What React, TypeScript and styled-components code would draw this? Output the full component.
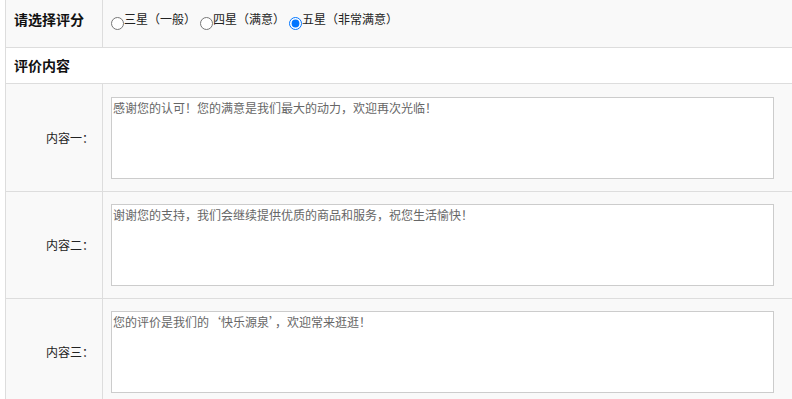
import React from "react";
import styled, { createGlobalStyle } from "styled-components";

const Global = createGlobalStyle`
  html, body { margin: 0; padding: 0; background: #fff; overflow: hidden; }
  body { font-family: "Noto Sans CJK SC", "Noto Sans", sans-serif; color: #333; }
`;

const Table = styled.table`
  margin-left: 5px;
  width: calc(100% - 5px);
  border-collapse: collapse;
  table-layout: fixed;
  border-left: 1px solid #dddddd;
`;

const FirstCol = styled.col`
  width: 97px;
`;

const Row = styled.tr<{ $bg?: string }>`
  background: ${(p) => p.$bg || "#fff"};
  border-bottom: 1px solid #dddddd;
`;

const HeadCell = styled.td<{ $h: number }>`
  height: ${(p) => p.$h}px;
  box-sizing: border-box;
  padding: 9px 8px 0 8px;
  vertical-align: top;
  font-size: 14px;
  font-weight: bold;
  line-height: 20px;
  color: #111;
  border-right: 1px solid #dddddd;
  white-space: nowrap;
`;

const SectionCell = styled.td`
  height: 36px;
  box-sizing: border-box;
  padding: 0 8px;
  vertical-align: middle;
  font-size: 14px;
  font-weight: bold;
  line-height: 20px;
  color: #111;
`;

const LabelCell = styled.td`
  box-sizing: border-box;
  padding: 0 8px;
  text-align: right;
  vertical-align: middle;
  font-size: 12px;
  color: #222;
  border-right: 1px solid #dddddd;
  white-space: nowrap;
`;

const FieldCell = styled.td<{ $top?: number }>`
  padding: ${(p) => p.$top ?? 12}px 8px 12px 8px;
  vertical-align: top;
`;

const RadioCell = styled.td`
  padding: 10px 8px 0 8px;
  vertical-align: top;
`;

const RadioGroup = styled.div`
  display: flex;
  align-items: flex-start;
  gap: 4px;
`;

const RadioLabel = styled.label`
  display: inline-flex;
  align-items: flex-start;
  font-size: 12px;
  line-height: 18px;
  color: #222;
  cursor: pointer;
`;

const Radio = styled.input`
  width: 13px;
  height: 13px;
  margin: 7px 0 0 0;
`;

const Area = styled.textarea`
  display: block;
  width: 663px;
  height: 82px;
  box-sizing: border-box;
  margin: 0;
  padding: 1px 1px;
  border: 1px solid #cccccc;
  resize: none;
  font-family: "Noto Sans CJK SC", "Noto Sans", sans-serif;
  font-size: 12px;
  line-height: 18px;
  color: #666;
  background: #fff;
  outline: none;
`;

const options = ["三星（一般）", "四星（满意）", "五星（非常满意）"];
const items = [
  { label: "内容一：", text: "感谢您的认可！您的满意是我们最大的动力，欢迎再次光临！", top: 13 },
  { label: "内容二：", text: "谢谢您的支持，我们会继续提供优质的商品和服务，祝您生活愉快！", top: 12 },
  { label: "内容三：", text: "您的评价是我们的‘快乐源泉’，欢迎常来逛逛！", top: 12 },
];

export default function App() {
  const [rating, setRating] = React.useState(2);
  return (
    <>
      <Global />
      <Table>
        <colgroup>
          <FirstCol />
          <col />
        </colgroup>
        <tbody>
          <Row $bg="#f9f9f9">
            <HeadCell $h={47}>请选择评分</HeadCell>
            <RadioCell>
              <RadioGroup>
                {options.map((o, i) => (
                  <RadioLabel key={o}>
                    <Radio
                      type="radio"
                      name="rating"
                      checked={rating === i}
                      onChange={() => setRating(i)}
                    />
                    <span>{o}</span>
                  </RadioLabel>
                ))}
              </RadioGroup>
            </RadioCell>
          </Row>
          <Row>
            <SectionCell colSpan={2}>评价内容</SectionCell>
          </Row>
          {items.map((it) => (
            <Row key={it.label} $bg="#f9f9f9">
              <LabelCell>{it.label}</LabelCell>
              <FieldCell $top={it.top}>
                <Area defaultValue={it.text} />
              </FieldCell>
            </Row>
          ))}
        </tbody>
      </Table>
    </>
  );
}
